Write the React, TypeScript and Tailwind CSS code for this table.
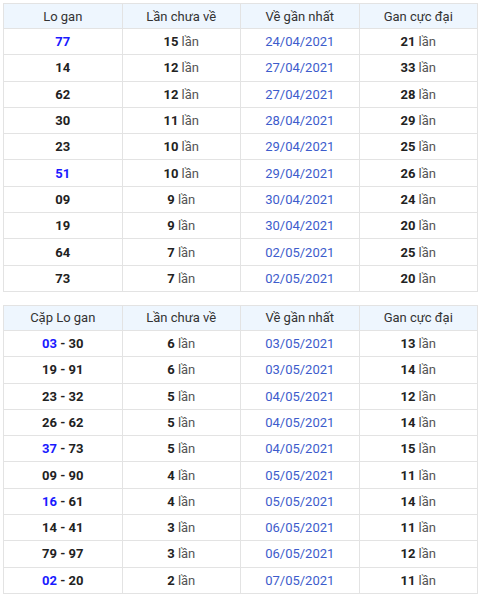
import type { JSX, ReactNode } from 'react';

interface LoRow {
  readonly lo: ReactNode;
  readonly missed: number;
  readonly last: string;
  readonly max: number;
}

const FONT = "font-['Roboto','Liberation_Sans',sans-serif]";

const singleRows: LoRow[] = [
  { lo: <Hot>77</Hot>, missed: 15, last: '24/04/2021', max: 21 },
  { lo: '14', missed: 12, last: '27/04/2021', max: 33 },
  { lo: '62', missed: 12, last: '27/04/2021', max: 28 },
  { lo: '30', missed: 11, last: '28/04/2021', max: 29 },
  { lo: '23', missed: 10, last: '29/04/2021', max: 25 },
  { lo: <Hot>51</Hot>, missed: 10, last: '29/04/2021', max: 26 },
  { lo: '09', missed: 9, last: '30/04/2021', max: 24 },
  { lo: '19', missed: 9, last: '30/04/2021', max: 20 },
  { lo: '64', missed: 7, last: '02/05/2021', max: 25 },
  { lo: '73', missed: 7, last: '02/05/2021', max: 20 },
];

const pairRows: LoRow[] = [
  { lo: <><Hot>03</Hot> - 30</>, missed: 6, last: '03/05/2021', max: 13 },
  { lo: '19 - 91', missed: 6, last: '03/05/2021', max: 14 },
  { lo: '23 - 32', missed: 5, last: '04/05/2021', max: 12 },
  { lo: '26 - 62', missed: 5, last: '04/05/2021', max: 14 },
  { lo: <><Hot>37</Hot> - 73</>, missed: 5, last: '04/05/2021', max: 15 },
  { lo: '09 - 90', missed: 4, last: '05/05/2021', max: 11 },
  { lo: <><Hot>16</Hot> - 61</>, missed: 4, last: '05/05/2021', max: 14 },
  { lo: '14 - 41', missed: 3, last: '06/05/2021', max: 11 },
  { lo: '79 - 97', missed: 3, last: '06/05/2021', max: 12 },
  { lo: <><Hot>02</Hot> - 20</>, missed: 2, last: '07/05/2021', max: 11 },
];

function Hot({ children }: { readonly children: ReactNode }): JSX.Element {
  return <span className="text-[#1a1aff]">{children}</span>;
}

function Times({ value }: { readonly value: number }): JSX.Element {
  return (
    <>
      <b className="font-bold text-[#222]">{value}</b>{' '}
      <span className="font-normal text-[#555]">lần</span>
    </>
  );
}

const CELL = 'border border-[#e3e3e3] text-center align-middle p-0';

function LoTable({ first, rows }: { readonly first: string; readonly rows: readonly LoRow[] }): JSX.Element {
  return (
    <table className="w-full table-fixed border-collapse text-[13px] leading-none">
      <thead>
        <tr className="h-[25px] bg-[#eef6fe] text-[#333]">
          <th className={`${CELL} font-normal`}>{first}</th>
          <th className={`${CELL} font-normal`}>Lần chưa về</th>
          <th className={`${CELL} font-normal`}>Về gần nhất</th>
          <th className={`${CELL} font-normal`}>Gan cực đại</th>
        </tr>
      </thead>
      <tbody>
        {rows.map((row) => (
          <tr key={row.last + String(row.missed) + String(row.max)} className="h-[26.3px]">
            <td className={`${CELL} font-bold text-[#222]`}>{row.lo}</td>
            <td className={CELL}>
              <Times value={row.missed} />
            </td>
            <td className={`${CELL} text-[#3d5ccc]`}>{row.last}</td>
            <td className={CELL}>
              <Times value={row.max} />
            </td>
          </tr>
        ))}
      </tbody>
    </table>
  );
}

export default function App(): JSX.Element {
  return (
    <div className={`${FONT} w-[480px] h-[595px] overflow-hidden bg-white pl-[3px] pr-[2px] pt-[3px]`}>
      <LoTable first="Lo gan" rows={singleRows} />
      <div className="h-[13px]" />
      <LoTable first="Cặp Lo gan" rows={pairRows} />
    </div>
  );
}
